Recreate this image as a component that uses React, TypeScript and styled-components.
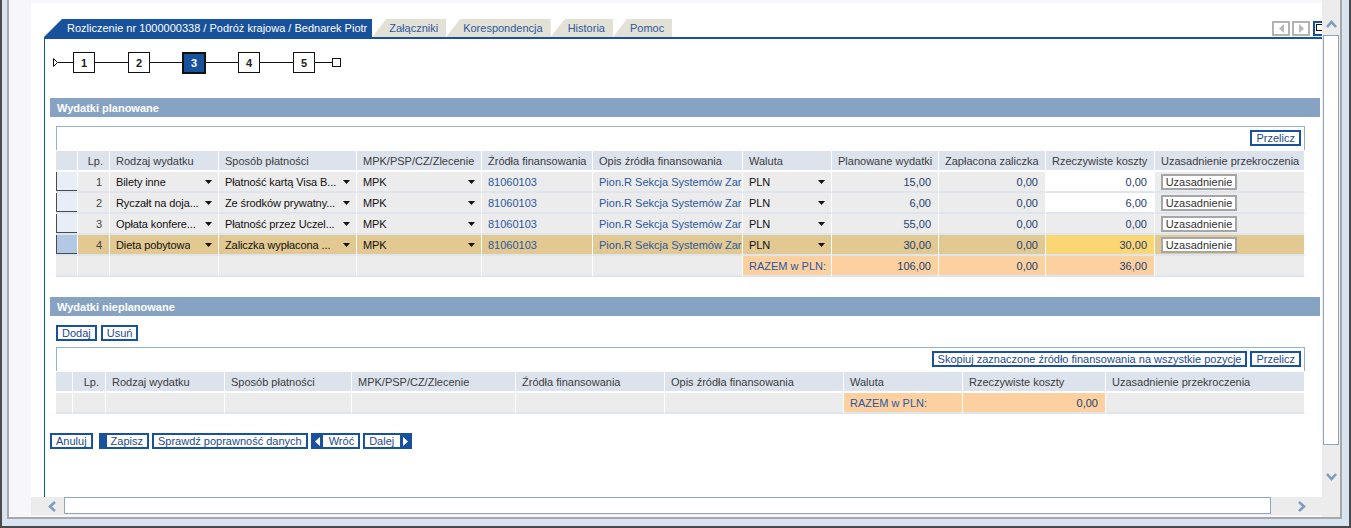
import React from "react";
import styled, { createGlobalStyle } from "styled-components";

const BLUE = "#18529c";
const LINK = "#2b58a0";
const MONEY = "#22406f";

const GlobalStyle = createGlobalStyle`
  html, body { margin: 0; padding: 0; }
  body {
    font-family: "Liberation Sans", Arial, sans-serif;
    font-size: 11px;
    background: #fff;
  }
  * { box-sizing: border-box; }
`;

type Tone = "base" | "white" | "tan" | "peach" | "yellow";

const toneBg: Record<Tone, string> = {
  base: "#ececec",
  white: "#ffffff",
  tan: "#e2c891",
  peach: "#fdd0a0",
  yellow: "#fad674",
};

/* ---------- window frame ---------- */

const Window = styled.div`
  width: 1351px;
  height: 528px;
  display: flex;
  background: #d8e4f1;
  border: 2px solid #4b4b4b;
  border-top: none;
  padding: 0 7px 7px 5px;
`;

const Inner = styled.div`
  flex: 1;
  min-width: 0;
  display: flex;
  background: #f7f7fb;
  border: 2px solid #a8a8a8;
  border-top: none;
`;

const MainCol = styled.div`
  flex: 1;
  display: flex;
  flex-direction: column;
  padding: 3px 0 2px 22px;
  min-width: 0;
`;

const Viewport = styled.div`
  height: 494px;
  background: #fff;
  overflow: hidden;
  padding: 16px 0 0 13px;
`;

const HScroll = styled.div`
  height: 18px;
  display: flex;
  background: #ececec;
`;

const HArrow = styled.div<{ $w: number; $pad: number }>`
  width: ${(p) => p.$w}px;
  padding-left: ${(p) => p.$pad}px;
  display: flex;
  align-items: center;
`;

const HThumb = styled.div`
  width: 1207px;
  height: 17px;
  background: #fff;
  border: 1px solid #8fa6c2;
`;

const VScroll = styled.div`
  width: 18px;
  flex: none;
  display: flex;
  flex-direction: column;
  background: #ececec;
`;

const VArrow = styled.div<{ $h: number; $top: number }>`
  height: ${(p) => p.$h}px;
  padding: ${(p) => p.$top}px 0 0 4px;
`;

const VThumb = styled.div`
  height: 410px;
  margin: 0 1px;
  background: #fff;
  border: 1px solid #8fa6c2;
`;

const Chevron = ({ dir }: { dir: "up" | "down" | "left" | "right" }) => {
  const pts = {
    up: "1,7 5.5,2 10,7",
    down: "1,2 5.5,7 10,2",
    left: "7,1 2,5.5 7,10",
    right: "2,1 7,5.5 2,10",
  }[dir];
  const vertical = dir === "up" || dir === "down";
  return (
    <svg width={vertical ? 11 : 9} height={vertical ? 9 : 11} viewBox={vertical ? "0 0 11 9" : "0 0 9 11"}>
      <polyline points={pts} fill="none" stroke="#7f9cc0" strokeWidth="2.6" />
    </svg>
  );
};

/* ---------- tabs ---------- */

const Panel = styled.div`
  width: 1292px;
  height: 100%;
  display: flex;
  flex-direction: column;
`;

const TabRow = styled.div`
  height: 18px;
  display: flex;
  align-items: stretch;
`;

const Tab = styled.div<{ $active?: boolean }>`
  display: flex;
  align-items: center;
  white-space: nowrap;
  padding: ${(p) => (p.$active ? "0 5px 0 23px" : "0 8px 0 17px")};
  background: ${(p) => (p.$active ? BLUE : "#e3e1d5")};
  color: ${(p) => (p.$active ? "#fff" : LINK)};
  clip-path: ${(p) =>
    p.$active
      ? "polygon(18px 0, 100% 0, 100% 100%, 0 100%)"
      : "polygon(14px 0, 100% 0, 100% 100%, 0 100%)"};
`;

const NavGroup = styled.div`
  margin-left: auto;
  margin-right: 5px;
  display: flex;
  gap: 2px;
  align-items: flex-start;
  padding-top: 2px;
`;

const NavBox = styled.div<{ $blue?: boolean }>`
  width: 18px;
  height: 15px;
  display: flex;
  align-items: center;
  justify-content: center;
  background: #fff;
  border: 2px solid ${(p) => (p.$blue ? BLUE : "#b3b3b3")};
  margin-left: ${(p) => (p.$blue ? "1px" : "0")};
`;

const WinIcon = styled.div`
  width: 7px;
  height: 7px;
  border: 1px solid #111;
  align-self: flex-start;
  margin: 1px 0 0 -6px;
`;

/* ---------- panel body ---------- */

const PanelBody = styled.div`
  flex: 1;
  border-top: 2px solid ${BLUE};
  border-left: 1px solid ${BLUE};
  padding: 13px 16px 0 5px;
`;

const Steps = styled.div`
  height: 21px;
  display: flex;
  align-items: center;
  margin-left: 3px;
`;

const StepLine = styled.div<{ $w: number }>`
  width: ${(p) => p.$w}px;
  height: 1px;
  background: #111;
`;

const StepBox = styled.div<{ $current?: boolean }>`
  width: ${(p) => (p.$current ? 24 : 22)}px;
  height: ${(p) => (p.$current ? 22 : 21)}px;
  display: flex;
  align-items: center;
  justify-content: center;
  font-weight: bold;
  border: ${(p) => (p.$current ? "2px solid #111" : "1px solid #111")};
  background: ${(p) => (p.$current ? BLUE : "#fff")};
  color: ${(p) => (p.$current ? "#fff" : "#222")};
`;

const StepEnd = styled.div`
  width: 9px;
  height: 9px;
  border: 1px solid #111;
`;

const SectionBar = styled.div<{ $top: number }>`
  margin-top: ${(p) => p.$top}px;
  height: 19px;
  display: flex;
  align-items: center;
  padding-left: 7px;
  background: #87a3c4;
  color: #fff;
  font-weight: bold;
`;

const SectionContent = styled.div`
  padding: 9px 15px 0 6px;
`;

const ButtonRow = styled.div<{ $gap: number }>`
  display: flex;
  gap: ${(p) => p.$gap}px;
`;

const ToolbarBox = styled.div<{ $top?: number }>`
  margin-top: ${(p) => p.$top ?? 0}px;
  height: 24px;
  display: flex;
  justify-content: flex-end;
  align-items: flex-start;
  gap: 3px;
  padding: 3px 3px 0 0;
  border: 1px solid #97b0cc;
  border-bottom: none;
`;

const Btn = styled.button<{ $lead?: boolean }>`
  height: 16px;
  display: inline-flex;
  align-items: center;
  padding: 0 4px;
  margin: 0;
  font-family: inherit;
  font-size: 11px;
  line-height: 12px;
  color: #1f4a8c;
  background: #fff;
  border: 2px solid ${BLUE};
  border-left-width: ${(p) => (p.$lead ? 8 : 2)}px;
  border-radius: 0;
  white-space: nowrap;
  cursor: pointer;
`;

const ArrowBlock = styled.span<{ $side: "left" | "right" }>`
  align-self: stretch;
  width: 10px;
  display: flex;
  align-items: center;
  justify-content: center;
  background: ${BLUE};
  margin: ${(p) => (p.$side === "left" ? "0 6px 0 -4px" : "0 -4px 0 6px")};
`;

const Tri = ({ dir }: { dir: "left" | "right" }) => (
  <svg width="5" height="9" viewBox="0 0 5 9">
    <path d={dir === "left" ? "M5 0V9L0 4.5z" : "M0 0V9L5 4.5z"} fill="#fff" />
  </svg>
);

const Footer = styled.div`
  margin-top: 19px;
  display: flex;
  gap: 3px;
`;

/* ---------- grid ---------- */

const Grid = styled.table`
  margin-top: 1px;
  width: 1249px;
  table-layout: fixed;
  border-collapse: separate;
  border-spacing: 0;
`;

const Th = styled.th<{ $right?: boolean }>`
  height: 21px;
  padding: 0 6px;
  background: #dde3ed;
  color: #3c3c3c;
  font-weight: normal;
  text-align: ${(p) => (p.$right ? "right" : "left")};
  border-right: 1px solid #fff;
  border-bottom: 2px solid #fff;
  white-space: nowrap;
  overflow: hidden;
`;

const Td = styled.td<{ $tone?: Tone; $right?: boolean; $color?: string; $clip?: boolean }>`
  height: 21px;
  padding: ${(p) => (p.$clip ? "0 1px 0 6px" : "0 7px 0 6px")};
  background: ${(p) => toneBg[p.$tone ?? "base"]};
  color: ${(p) => p.$color ?? "#111"};
  text-align: ${(p) => (p.$right ? "right" : "left")};
  border-right: 1px solid #fff;
  border-bottom: 2px solid #dfe5ee;
  white-space: nowrap;
  overflow: hidden;
`;

const SelTd = styled.td<{ $tone?: Tone }>`
  height: 21px;
  padding: 0;
  background: ${(p) => toneBg[p.$tone ?? "base"]};
  border-right: 1px solid #fff;
  border-bottom: 2px solid #dfe5ee;
`;

const SelMark = styled.div<{ $active?: boolean }>`
  height: 19px;
  background: ${(p) => (p.$active ? "#b3c8e4" : "#e8eef8")};
  border-left: 1px solid #4a4a4a;
  border-bottom: 1px solid #4a4a4a;
`;

const SelectBox = styled.div`
  display: flex;
  align-items: center;
  justify-content: space-between;
  gap: 2px;
  margin-right: -1px;
`;

const SelectText = styled.span`
  overflow: hidden;
  white-space: nowrap;
  letter-spacing: -0.1px;
`;

const Caret = () => (
  <svg width="7" height="4" viewBox="0 0 7 4" style={{ flex: "none" }}>
    <path d="M0 0h7L3.5 4z" fill="#111" />
  </svg>
);

const UzBtn = styled.button`
  height: 16px;
  width: 76px;
  padding: 0;
  font-family: inherit;
  font-size: 11px;
  color: #333;
  background: #fff;
  border: 2px solid #a6a6a6;
  border-radius: 0;
`;

const Select = ({ children }: { children: React.ReactNode }) => (
  <SelectBox>
    <SelectText>{children}</SelectText>
    <Caret />
  </SelectBox>
);

const planned = [
  { lp: 1, rodzaj: "Bilety inne", sposob: "Płatność kartą Visa B...", plan: "15,00", real: "0,00", realTone: "white" as Tone },
  { lp: 2, rodzaj: "Ryczałt na doja...", sposob: "Ze środków prywatny...", plan: "6,00", real: "6,00", realTone: "white" as Tone },
  { lp: 3, rodzaj: "Opłata konfere...", sposob: "Płatność przez Uczel...", plan: "55,00", real: "0,00", realTone: "base" as Tone },
  { lp: 4, rodzaj: "Dieta pobytowa", sposob: "Zaliczka wypłacona ...", plan: "30,00", real: "30,00", realTone: "yellow" as Tone, active: true },
];

const cols1 = [22, 32, 109, 138, 125, 111, 150, 89, 107, 107, 109, 150];
const cols2 = [17, 33, 119, 127, 164, 149, 179, 119, 143, 199];

const Cols = ({ widths }: { widths: number[] }) => (
  <colgroup>
    {widths.map((w, i) => (
      <col key={i} style={{ width: w }} />
    ))}
  </colgroup>
);

export default function App() {
  return (
    <>
      <GlobalStyle />
      <Window>
        <Inner>
          <MainCol>
            <Viewport>
              <Panel>
                <TabRow>
                  <Tab $active>Rozliczenie nr 1000000338 / Podróż krajowa / Bednarek Piotr</Tab>
                  <Tab>Załączniki</Tab>
                  <Tab>Korespondencja</Tab>
                  <Tab>Historia</Tab>
                  <Tab>Pomoc</Tab>
                  <NavGroup>
                    <NavBox>
                      <svg width="5" height="9" viewBox="0 0 5 9"><path d="M5 0V9L0 4.5z" fill="#b8b8b8" /></svg>
                    </NavBox>
                    <NavBox>
                      <svg width="5" height="9" viewBox="0 0 5 9"><path d="M0 0V9L5 4.5z" fill="#b8b8b8" /></svg>
                    </NavBox>
                    <NavBox $blue>
                      <WinIcon />
                    </NavBox>
                  </NavGroup>
                </TabRow>

                <PanelBody>
                  <Steps>
                    <svg width="5" height="9" viewBox="0 0 5 9"><path d="M0.5 0.5V8.5L4.5 4.5z" fill="#fff" stroke="#111" /></svg>
                    <StepLine $w={15} />
                    <StepBox>1</StepBox>
                    <StepLine $w={33} />
                    <StepBox>2</StepBox>
                    <StepLine $w={32} />
                    <StepBox $current>3</StepBox>
                    <StepLine $w={32} />
                    <StepBox>4</StepBox>
                    <StepLine $w={33} />
                    <StepBox>5</StepBox>
                    <StepLine $w={17} />
                    <StepEnd />
                  </Steps>

                  <SectionBar $top={25}>Wydatki planowane</SectionBar>
                  <SectionContent>
                    <ToolbarBox>
                      <Btn>Przelicz</Btn>
                    </ToolbarBox>
                    <Grid>
                      <Cols widths={cols1} />
                      <thead>
                        <tr>
                          <Th />
                          <Th $right>Lp.</Th>
                          <Th>Rodzaj wydatku</Th>
                          <Th>Sposób płatności</Th>
                          <Th>MPK/PSP/CZ/Zlecenie</Th>
                          <Th>Źródła finansowania</Th>
                          <Th>Opis źródła finansowania</Th>
                          <Th>Waluta</Th>
                          <Th>Planowane wydatki</Th>
                          <Th>Zapłacona zaliczka</Th>
                          <Th>Rzeczywiste koszty</Th>
                          <Th>Uzasadnienie przekroczenia</Th>
                        </tr>
                      </thead>
                      <tbody>
                        {planned.map((r) => {
                          const tone: Tone = r.active ? "tan" : "base";
                          return (
                            <tr key={r.lp}>
                              <SelTd $tone={tone}>
                                <SelMark $active={r.active} />
                              </SelTd>
                              <Td $tone={tone} $right $color="#444">{r.lp}</Td>
                              <Td $tone={tone}><Select>{r.rodzaj}</Select></Td>
                              <Td $tone={tone}><Select>{r.sposob}</Select></Td>
                              <Td $tone={tone}><Select>MPK</Select></Td>
                              <Td $tone={tone} $color={LINK}>81060103</Td>
                              <Td $tone={tone} $color={LINK} $clip>Pion.R Sekcja Systemów Zarządzania</Td>
                              <Td $tone={tone}><Select>PLN</Select></Td>
                              <Td $tone={tone} $right $color={MONEY}>{r.plan}</Td>
                              <Td $tone={tone} $right $color={MONEY}>0,00</Td>
                              <Td $tone={r.realTone} $right $color={MONEY}>{r.real}</Td>
                              <Td $tone={tone}><UzBtn>Uzasadnienie</UzBtn></Td>
                            </tr>
                          );
                        })}
                        <tr>
                          <SelTd />
                          <Td />
                          <Td />
                          <Td />
                          <Td />
                          <Td />
                          <Td />
                          <Td $tone="peach" $color={LINK}>RAZEM w PLN:</Td>
                          <Td $tone="peach" $right $color={MONEY}>106,00</Td>
                          <Td $tone="peach" $right $color={MONEY}>0,00</Td>
                          <Td $tone="peach" $right $color={MONEY}>36,00</Td>
                          <Td />
                        </tr>
                      </tbody>
                    </Grid>
                  </SectionContent>

                  <SectionBar $top={20}>Wydatki nieplanowane</SectionBar>
                  <SectionContent>
                    <ButtonRow $gap={4}>
                      <Btn>Dodaj</Btn>
                      <Btn>Usuń</Btn>
                    </ButtonRow>
                    <ToolbarBox $top={6}>
                      <Btn>Skopiuj zaznaczone źródło finansowania na wszystkie pozycje</Btn>
                      <Btn>Przelicz</Btn>
                    </ToolbarBox>
                    <Grid>
                      <Cols widths={cols2} />
                      <thead>
                        <tr>
                          <Th />
                          <Th $right>Lp.</Th>
                          <Th>Rodzaj wydatku</Th>
                          <Th>Sposób płatności</Th>
                          <Th>MPK/PSP/CZ/Zlecenie</Th>
                          <Th>Źródła finansowania</Th>
                          <Th>Opis źródła finansowania</Th>
                          <Th>Waluta</Th>
                          <Th>Rzeczywiste koszty</Th>
                          <Th>Uzasadnienie przekroczenia</Th>
                        </tr>
                      </thead>
                      <tbody>
                        <tr>
                          <SelTd />
                          <Td />
                          <Td />
                          <Td />
                          <Td />
                          <Td />
                          <Td />
                          <Td $tone="peach" $color={LINK}>RAZEM w PLN:</Td>
                          <Td $tone="peach" $right $color={MONEY}>0,00</Td>
                          <Td />
                        </tr>
                      </tbody>
                    </Grid>
                  </SectionContent>

                  <Footer>
                    <Btn style={{ marginRight: 3 }}>Anuluj</Btn>
                    <Btn $lead>Zapisz</Btn>
                    <Btn>Sprawdź poprawność danych</Btn>
                    <Btn>
                      <ArrowBlock $side="left"><Tri dir="left" /></ArrowBlock>
                      Wróć
                    </Btn>
                    <Btn>
                      Dalej
                      <ArrowBlock $side="right"><Tri dir="right" /></ArrowBlock>
                    </Btn>
                  </Footer>
                </PanelBody>
              </Panel>
            </Viewport>
            <HScroll>
              <HArrow $w={33} $pad={17}><Chevron dir="left" /></HArrow>
              <HThumb />
              <HArrow $w={51} $pad={26}><Chevron dir="right" /></HArrow>
            </HScroll>
          </MainCol>
          <VScroll>
            <VArrow $h={35} $top={19}><Chevron dir="up" /></VArrow>
            <VThumb />
            <VArrow $h={40} $top={26}><Chevron dir="down" /></VArrow>
          </VScroll>
        </Inner>
      </Window>
    </>
  );
}
